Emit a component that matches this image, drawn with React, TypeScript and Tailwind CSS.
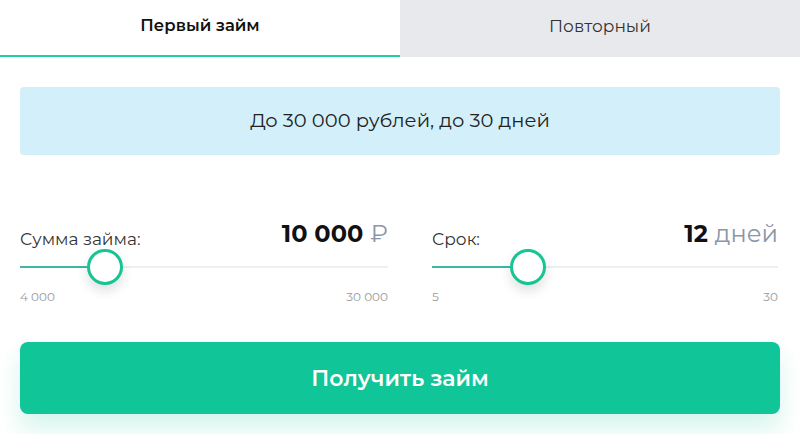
import React from 'react';

const font = { fontFamily: 'Montserrat, Inter, "Noto Sans", sans-serif' };

interface SliderProps {
  label: string;
  value: string;
  unit: string;
  min: string;
  max: string;
  percent: number;
  width: string;
}

const Slider: React.FC<SliderProps> = ({ label, value, unit, min, max, percent, width }) => (
  <div className={width}>
    <div className="flex items-end justify-between">
      <span className="text-[17px] text-[#333] leading-none mb-[-2px]">{label}</span>
      <span className="text-[24px] leading-none">
        <span className="font-bold text-[#111]">{value}</span>
        <span className="text-[#8d95a8] ml-[7px]">{unit}</span>
      </span>
    </div>
    <div className="relative h-9 mt-[3px] flex items-center">
      <div className="h-[2px] w-full bg-[#efefef]"></div>
      <div className="absolute left-0 h-[2px] bg-[#3db8a2]" style={{ width: `${percent}%` }}></div>
      <div
        className="absolute w-9 h-9 rounded-full bg-white border-[3px] border-[#17c493] shadow-[0_6px_12px_rgba(0,0,0,0.12)]"
        style={{ left: `calc(${percent}% - 18px)` }}
      ></div>
    </div>
    <div className="flex justify-between mt-[3px] text-[12px] text-[#9a9a9a]">
      <span>{min}</span>
      <span>{max}</span>
    </div>
  </div>
);

export default function App() {
  return (
    <div className="w-[800px] h-[434px] bg-white overflow-hidden" style={font}>
      <div className="flex h-[57px]">
        <div className="w-1/2 flex items-center justify-center pb-[4px] border-b-2 border-[#1dd19e] text-[16.5px] font-semibold text-[#111]">
          Первый займ
        </div>
        <div className="w-1/2 flex items-center justify-center pb-[4px] bg-[#e8e9ec] text-[17px] text-[#333]">
          Повторный
        </div>
      </div>
      <div className="px-5 pt-[30px]">
        <div className="h-[68px] rounded bg-[#d3f0fa] flex items-center justify-center text-[19.5px] text-[#222]">
          До 30 000 рублей, до 30 дней
        </div>
        <div className="flex gap-11 mt-[67px]">
          <Slider label="Сумма займа:" value="10 000" unit="₽" min="4 000" max="30 000" percent={23} width="w-[368px]" />
          <Slider label="Срок:" value="12" unit="дней" min="5" max="30" percent={27.7} width="w-[346px]" />
        </div>
        <button className="mt-[36px] w-full h-[72px] rounded-lg bg-[#10c597] text-white text-[22px] font-semibold shadow-[0_14px_24px_rgba(16,197,151,0.18)]">
          Получить займ
        </button>
      </div>
    </div>
  );
}
